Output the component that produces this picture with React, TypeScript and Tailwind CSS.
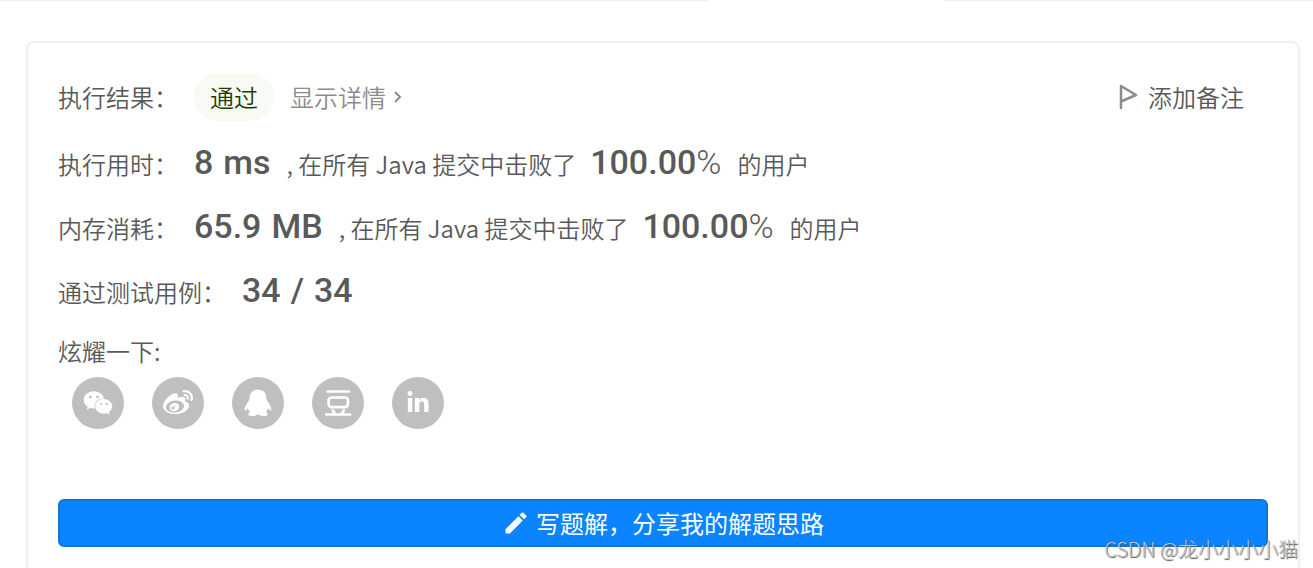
import type { ReactNode } from "react";
import { FaWeibo, FaWeixin, FaLinkedinIn } from "react-icons/fa";
import { MdEdit } from "react-icons/md";

function DoubanIcon() {
  return (
    <svg viewBox="0 0 28 28" className="size-7" fill="none" stroke="currentColor" strokeWidth="2.7" strokeLinecap="round">
      <path d="M3.500 2.500h21.500M2.300 25.500h23.900M8.800 21.500l1.700 2.800M19.700 21.500l-1.700 2.800" />
      <rect x="4.700" y="8.500" width="19.200" height="9.600" rx="2.800" />
    </svg>
  );
}

function QqIcon() {
  return (
    <svg viewBox="0 0 28 28" className="size-7" fill="currentColor">
      <path d="M14 .5c-5 0-8.400 3.600-8.400 8.200 0 1.100-.2 1.900-.6 2.900C3 14.200.5 17.500.7 20.800c.1 1.400 1.100.9 1.900-.1.500-.6.900-1.200 1.200-1.800.4 1.700 1.200 3 2.400 4.100-1.600.6-2.200 1.500-1.800 2.700.7 1.700 7.200 1.900 9.600-.4 2.400 2.300 8.900 2.100 9.600.4.400-1.200-.2-2.100-1.800-2.700 1.200-1.100 2-2.400 2.400-4.100.3.600.7 1.200 1.200 1.800.8 1 1.800 1.500 1.900.1.200-3.300-2.300-6.600-4.300-9.200-.4-1-.6-1.800-.6-2.900C22.400 4.100 19 .5 14 .5z" />
    </svg>
  );
}

const shares: { label: string; icon: ReactNode }[] = [
  { label: "微信", icon: <FaWeixin className="size-[30px]" /> },
  { label: "微博", icon: <FaWeibo className="size-[30px]" /> },
  { label: "QQ", icon: <QqIcon /> },
  { label: "豆瓣", icon: <DoubanIcon /> },
  { label: "LinkedIn", icon: <FaLinkedinIn className="size-6" /> },
];

function Figure({ children }: { children: ReactNode }) {
  return <span className="flex gap-2.5 font-['Roboto',sans-serif] text-[34px] font-medium">{children}</span>;
}

function Metric({ label, value, unit, percent }: { label: string; value: string; unit: string; percent: string }) {
  return (
    <div className="flex h-16 items-baseline leading-[64px]">
      <span className="mr-4">{label}</span>
      <Figure>
        <span>{value}</span>
        <span>{unit}</span>
      </Figure>
      <span className="mr-3.5 ml-4">, 在所有 Java 提交中击败了</span>
      <Figure>
        <span>
          {percent}
          <span className="font-light">%</span>
        </span>
      </Figure>
      <span className="ml-4">的用户</span>
    </div>
  );
}

export default function App() {
  return (
    <div className="relative overflow-hidden bg-white font-['Noto_Sans_CJK_SC',sans-serif] text-[24px] font-[350] text-[#595959]">
      <div className="flex h-px">
        <div className="flex-[708] bg-[#f0f0f0]" />
        <div className="flex-[236]" />
        <div className="flex-[369] bg-[#f0f0f0]" />
      </div>
      <main className="mt-10 mr-[13px] ml-[26px] rounded-t-lg border-2 border-b-0 border-[#f0f0f0] px-[30px] pt-[30px] pb-[21px]">
        <div className="flex h-12 items-center">
          <span className="mr-4">执行结果：</span>
          <span className="mr-4 flex h-12 items-center rounded-full bg-[#f8fbf4] px-4 text-[#1f3a0a]">通过</span>
          <a href="#detail" className="flex items-center gap-1 text-[#8c8c8c]">
            显示详情
            <svg viewBox="0 0 16 16" className="size-4" fill="none" stroke="currentColor" strokeWidth="2">
              <path d="M5 3l5 5-5 5" />
            </svg>
          </a>
          <button type="button" className="mr-6 ml-auto flex items-center gap-2">
            <svg viewBox="0 0 24 28" className="h-7 w-6 text-[#8c8c8c]" fill="none" stroke="currentColor" strokeWidth="2.500" strokeLinejoin="round" strokeLinecap="round">
              <path d="M5 25V3l15 9-15 6.500" />
            </svg>
            添加备注
          </button>
        </div>
        <div className="mt-[9px]">
          <Metric label="执行用时：" value="8" unit="ms" percent="100.00" />
          <Metric label="内存消耗：" value="65.9" unit="MB" percent="100.00" />
          <div className="flex h-16 items-baseline leading-[64px]">
            <span className="mr-4">通过测试用例：</span>
            <Figure>
              <span>34</span>
              <span>/</span>
              <span>34</span>
            </Figure>
          </div>
        </div>
        <div className="mt-[11px] leading-[36px]">炫耀一下:</div>
        <div className="mt-2 flex gap-7 px-3.5">
          {shares.map((s) => (
            <button key={s.label} type="button" aria-label={s.label} className="flex size-[52px] items-center justify-center rounded-full bg-[#bfbfbf] text-white">
              {s.icon}
            </button>
          ))}
        </div>
        <button type="button" className="mt-[70px] flex h-12 w-full items-center justify-center gap-1.5 rounded-md border-2 border-[#1173d4] bg-[#0a84ff] font-normal text-white">
          <MdEdit className="size-7" />
          写题解，分享我的解题思路
        </button>
      </main>
      <div className="absolute right-[15px] bottom-1 text-[20px] leading-[30px] font-light text-[#c4c4c4] [text-shadow:1px_1px_1px_#555]">CSDN @龙小小小小猫</div>
    </div>
  );
}
